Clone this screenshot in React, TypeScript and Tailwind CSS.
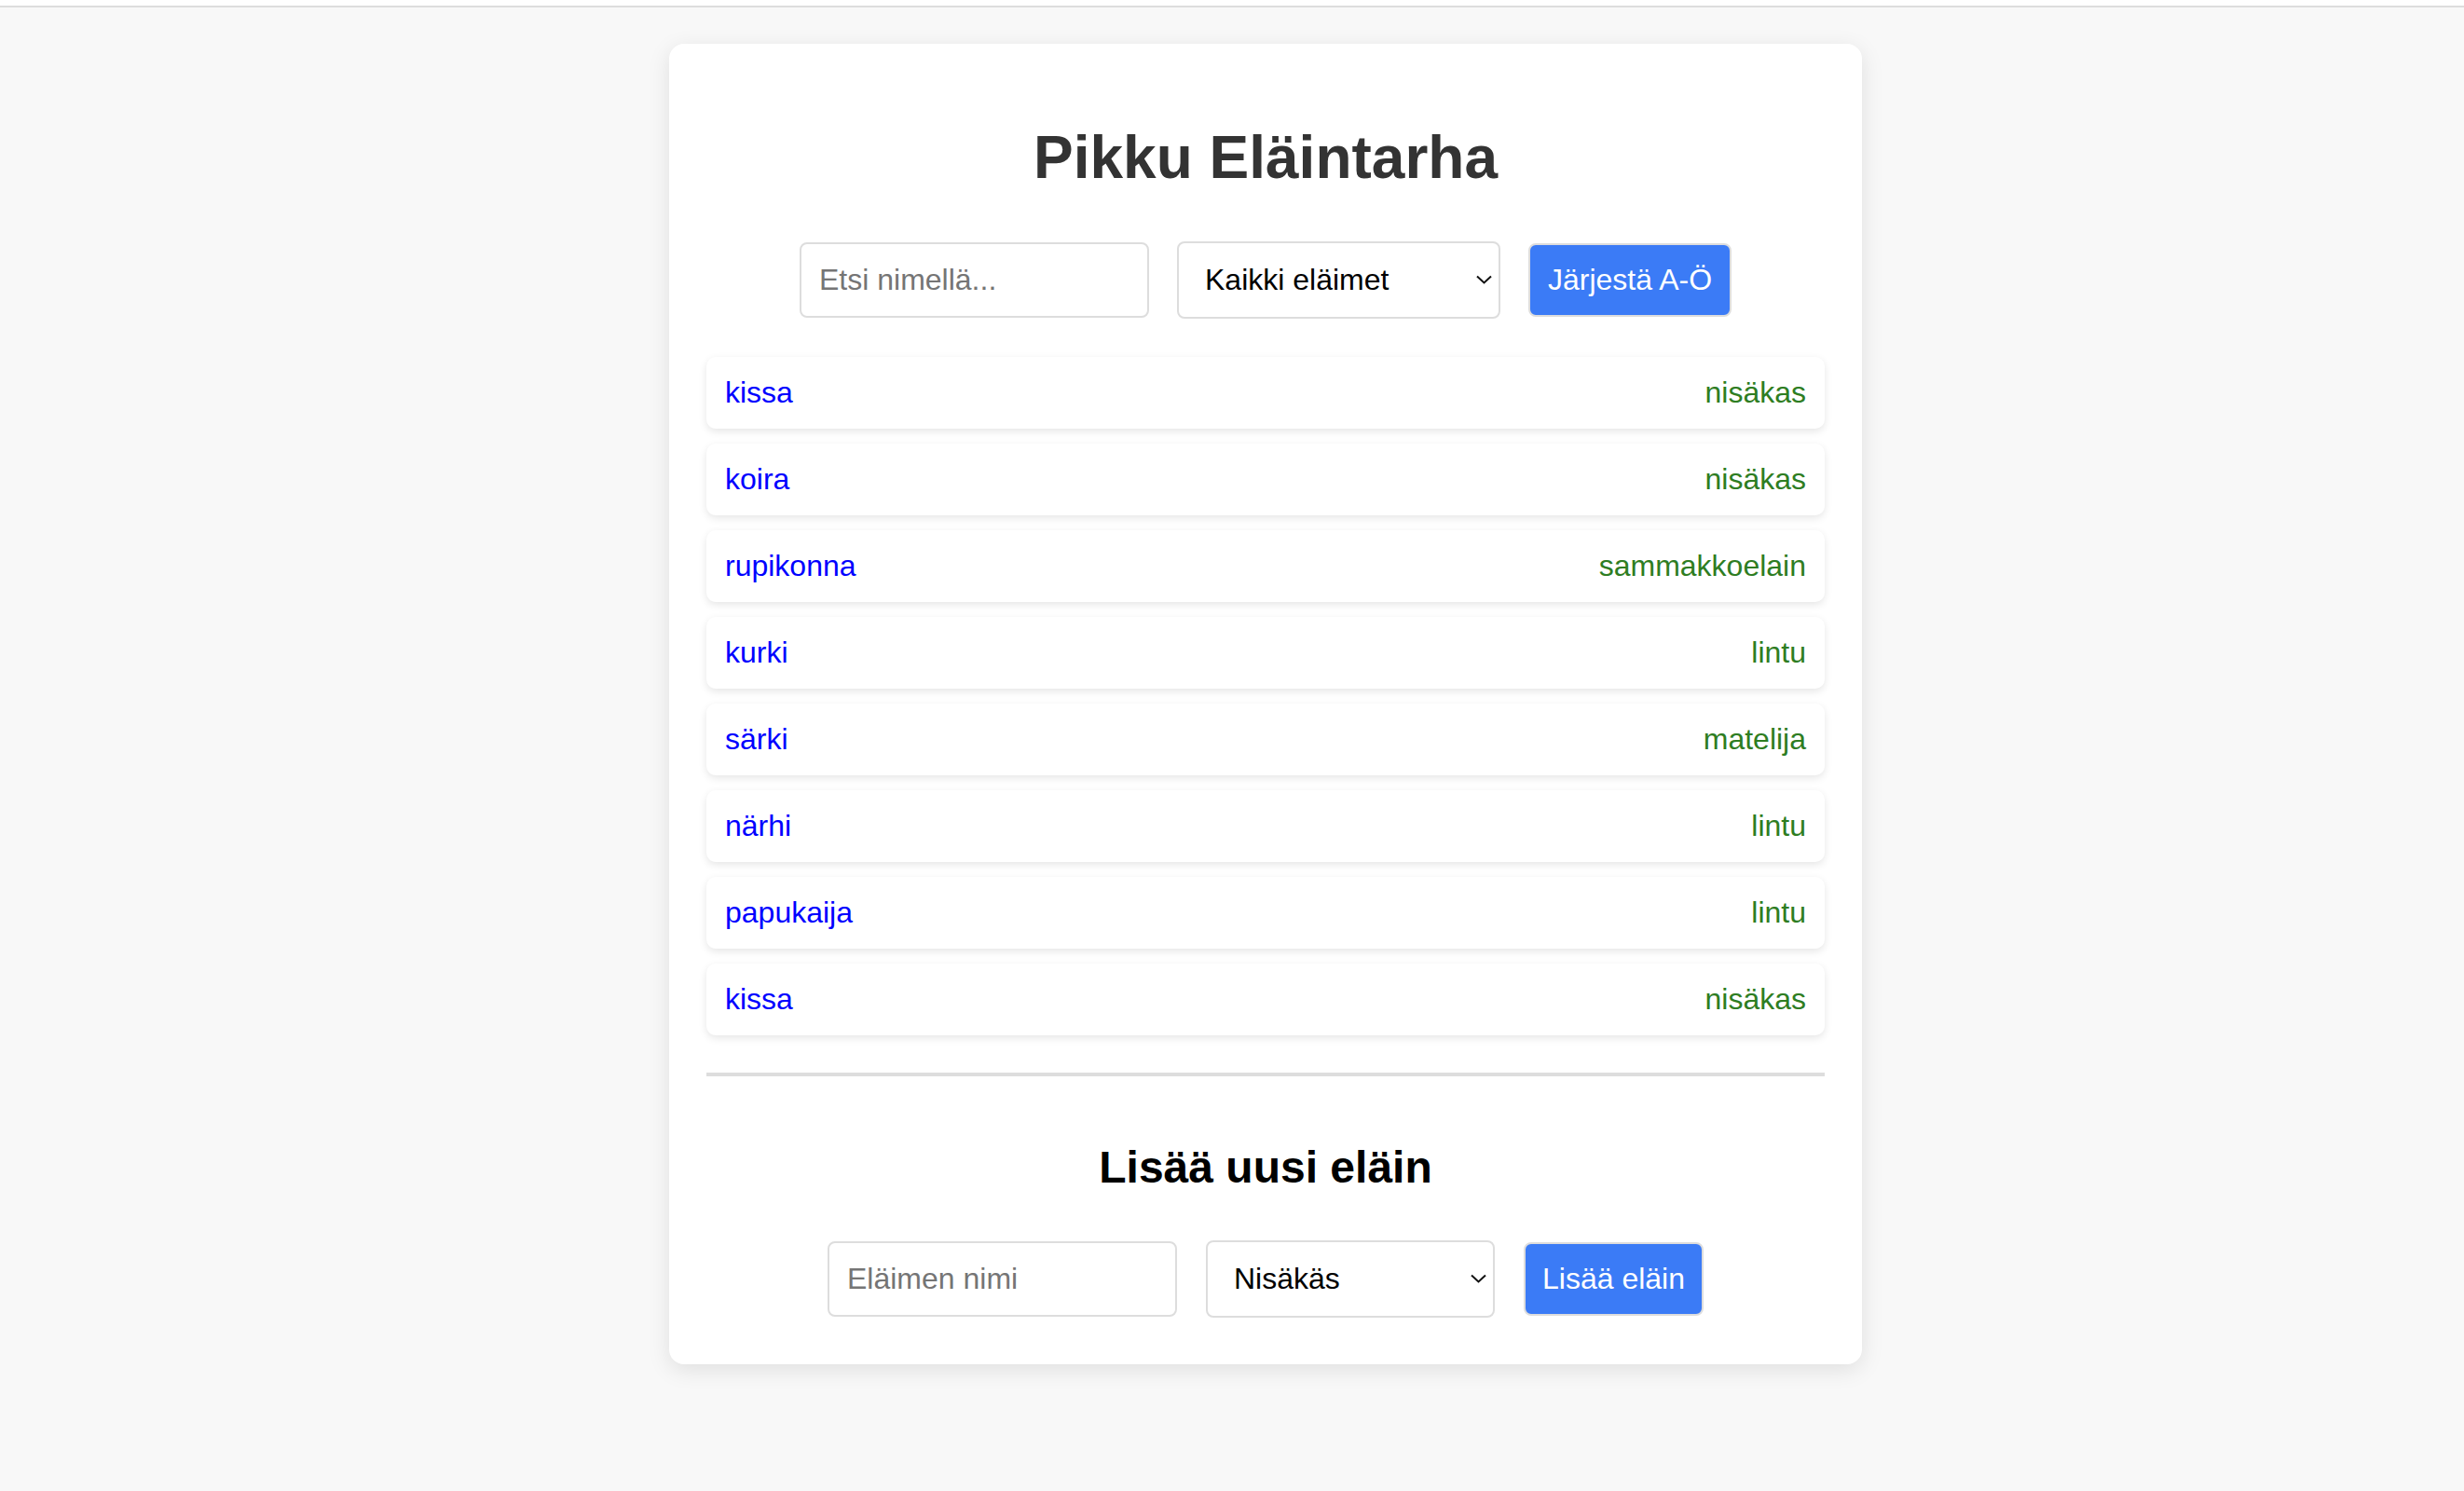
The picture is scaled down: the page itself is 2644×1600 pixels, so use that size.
import { useState } from "react";

type Animal = { name: string; type: string };

const animals: Animal[] = [
  { name: "kissa", type: "nisäkas" },
  { name: "koira", type: "nisäkas" },
  { name: "rupikonna", type: "sammakkoelain" },
  { name: "kurki", type: "lintu" },
  { name: "särki", type: "matelija" },
  { name: "närhi", type: "lintu" },
  { name: "papukaija", type: "lintu" },
  { name: "kissa", type: "nisäkas" },
];

const Chevron = () => (
  <svg
    className="pointer-events-none absolute right-[9px] top-1/2 -translate-y-1/2"
    width="17"
    height="10"
    viewBox="0 0 17 10"
    fill="none"
  >
    <path d="M1 1.5 L8.5 8.5 L16 1.5" stroke="#111" strokeWidth="2" />
  </svg>
);

const Select = ({ options, width }: { options: string[]; width: string }) => (
  <div className={`relative h-[83px] ${width}`}>
    <select className="h-full w-full appearance-none rounded-[8px] border-2 border-[#dddddd] bg-white pl-[28px] text-[32px] text-black outline-none">
      {options.map((o) => (
        <option key={o}>{o}</option>
      ))}
    </select>
    <Chevron />
  </div>
);

const App = () => {
  const [search, setSearch] = useState("");
  const [newName, setNewName] = useState("");

  return (
    <div className="min-h-[1600px] bg-[#f8f8f8] font-['Liberation_Sans',Arial,sans-serif]">
      <div className="h-[6px] bg-white" />
      <div className="h-[2px] bg-[#dddddd]" />
      <div className="flex justify-center pl-[72px] pt-[39px]">
        <div className="w-[1280px] rounded-[16px] bg-white px-[40px] pb-[50px] pt-[40px] shadow-[0_6px_24px_rgba(0,0,0,0.10)]">
          <h1 className="mt-[46px] text-center text-[64px] font-bold leading-[73.5px] text-[#333333]">
            Pikku Eläintarha
          </h1>

          <div className="mt-[52px] flex items-center justify-center gap-[30px]">
            <input
              value={search}
              onChange={(e) => setSearch(e.target.value)}
              placeholder="Etsi nimellä..."
              className="h-[81px] w-[375px] rounded-[8px] border-2 border-[#dddddd] px-[19px] text-[32px] placeholder:text-[#757575] outline-none"
            />
            <Select
              width="w-[347px]"
              options={["Kaikki eläimet", "nisäkas", "lintu", "matelija", "sammakkoelain"]}
            />
            <button className="h-[79px] w-[218px] rounded-[8px] border-2 border-[#dddddd] bg-[#3b7bf6] text-[32px] text-white">
              Järjestä A-Ö
            </button>
          </div>

          <ul className="mt-[41px] flex flex-col gap-[16px]">
            {animals.map((a, i) => (
              <li
                key={i}
                className="flex h-[77px] items-center justify-between rounded-[10px] bg-white px-[20px] text-[32px] shadow-[0_3px_8px_rgba(0,0,0,0.10)]"
              >
                <span className="text-[#0000ff]">{a.name}</span>
                <span className="text-[#2e7d22]">{a.type}</span>
              </li>
            ))}
          </ul>

          <div className="mt-[40px] h-[4px] bg-[#dddddd]" />

          <h2 className="mt-[70px] text-center text-[48px] font-bold leading-[55px] text-black">
            Lisää uusi eläin
          </h2>

          <div className="mt-[51px] flex items-center justify-center gap-[31px]">
            <input
              value={newName}
              onChange={(e) => setNewName(e.target.value)}
              placeholder="Eläimen nimi"
              className="h-[81px] w-[375px] rounded-[8px] border-2 border-[#dddddd] px-[19px] text-[32px] placeholder:text-[#757575] outline-none"
            />
            <Select
              width="w-[310px]"
              options={["Nisäkäs", "Lintu", "Matelija", "Kala"]}
            />
            <button className="h-[79px] w-[193px] rounded-[8px] border-2 border-[#dddddd] bg-[#3b7bf6] text-[32px] text-white">
              Lisää eläin
            </button>
          </div>
        </div>
      </div>
    </div>
  );
};

export default App;
